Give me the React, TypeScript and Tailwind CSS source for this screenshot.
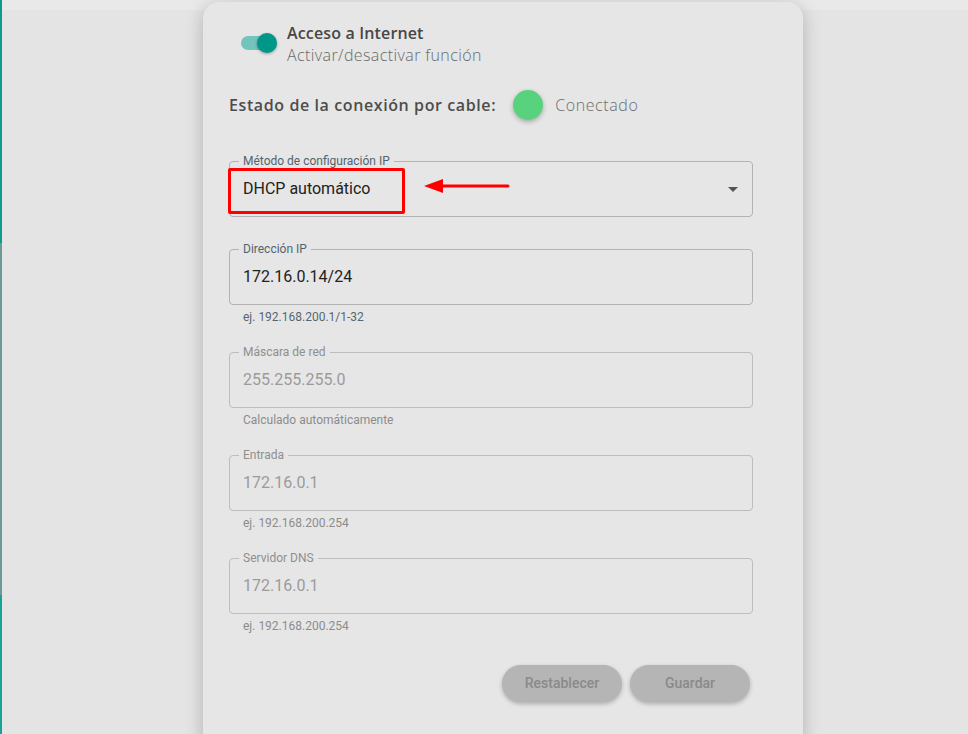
import { useState } from 'react';

interface FieldProps {
  label: string;
  value: string;
  helper?: string;
  disabled?: boolean;
}

function Field({ label, value, helper, disabled = false }: FieldProps) {
  return (
    <div className="flex flex-col">
      <fieldset
        className={
          disabled
            ? 'border border-[#bdbdbd] rounded-[4px] px-[13px] m-0'
            : 'border border-[#b3b3b3] rounded-[4px] px-[13px] m-0'
        }
      >
        <legend
          className={
            disabled
              ? 'px-[4px] -ml-[4px] text-[12px] leading-[12px] text-[#8f8f8f]'
              : 'px-[4px] -ml-[4px] text-[12px] leading-[12px] text-[#53646e]'
          }
        >
          {label}
        </legend>
        <div
          className={
            disabled
              ? 'pt-[10px] pb-[15px] text-[16px] leading-[24px] text-[#9b9b9b]'
              : 'pt-[10px] pb-[15px] text-[16px] leading-[24px] text-[#222]'
          }
        >
          {value}
        </div>
      </fieldset>
      {helper && (
        <p
          className={
            disabled
              ? 'mt-[4px] pl-[14px] text-[12px] leading-[16px] text-[#8c8c8c]'
              : 'mt-[4px] pl-[14px] text-[12px] leading-[16px] text-[#56666f]'
          }
        >
          {helper}
        </p>
      )}
    </div>
  );
}

export default function App() {
  const [enabled, setEnabled] = useState(true);

  return (
    <div
      className="relative w-full h-[734px] overflow-hidden bg-[#e4e4e4] flex items-start"
      style={{ fontFamily: 'Roboto, "Liberation Sans", sans-serif' }}
    >
      {/* dimmed page behind the dialog */}
      <div className="absolute left-0 top-0 w-full h-[10px] bg-[#e9e9e9]" />
      <div className="absolute left-0 top-0 w-[2px] h-[243px] bg-[#0f9a8e]" />
      <div className="absolute left-0 top-[243px] w-[2px] h-[352px] bg-[#6e9995]" />
      <div className="absolute left-0 top-[595px] w-[2px] h-[139px] bg-[#17a395]" />

      {/* Card */}
      <div className="relative ml-[203px] mt-[2px] w-[600px] h-[760px] bg-[#e6e6e6] rounded-t-[16px] shadow-[0_4px_18px_rgba(0,0,0,0.22)] pl-[26px]">
        {/* Toggle row */}
        <div className="flex items-start pt-[20px] pl-[12px]">
          <button
            onClick={() => setEnabled(!enabled)}
            className="relative w-[36px] h-[20px] mt-[11px] flex items-center"
          >
            <span
              className={
                enabled
                  ? 'absolute left-0 w-[34px] h-[14px] rounded-full bg-[#73c4bd]'
                  : 'absolute left-0 w-[34px] h-[14px] rounded-full bg-[#b0b0b0]'
              }
            />
            <span
              className={
                enabled
                  ? 'absolute left-[16px] w-[20px] h-[20px] rounded-full bg-[#009688] shadow-[0_1px_3px_rgba(0,0,0,0.35)]'
                  : 'absolute left-0 w-[20px] h-[20px] rounded-full bg-[#f5f5f5] shadow-[0_1px_3px_rgba(0,0,0,0.35)]'
              }
            />
          </button>
          <div
            className="ml-[10px] flex flex-col"
            style={{ fontFamily: '"Open Sans", Lato, sans-serif' }}
          >
            <span className="text-[16px] leading-[22px] font-semibold tracking-[0.15px] text-[#474747]">
              Acceso a Internet
            </span>
            <span className="text-[16px] leading-[22px] font-light tracking-[0.4px] text-[#6a6a6a]">
              Activar/desactivar función
            </span>
          </div>
        </div>

        {/* Status row */}
        <div
          className="flex items-center mt-[22px] h-[34px]"
          style={{ fontFamily: '"Open Sans", Lato, sans-serif' }}
        >
          <span className="text-[16px] font-semibold tracking-[0.6px] text-[#4d4d4d]">
            Estado de la conexión por cable:
          </span>
          <span className="ml-[17px] w-[30px] h-[30px] rounded-full bg-[#58d27c] shadow-[0_2px_5px_rgba(0,0,0,0.28)]" />
          <span className="ml-[12px] text-[16px] font-light tracking-[0.6px] text-[#6e6e6e]">
            Conectado
          </span>
        </div>

        {/* Fields */}
        <div className="w-[524px] mt-[33px] flex flex-col">
          <div className="relative">
            <fieldset className="border border-[#b3b3b3] rounded-[4px] px-[13px] m-0">
              <legend className="px-[4px] -ml-[4px] text-[12px] leading-[12px] text-[#53646e]">
                Método de configuración IP
              </legend>
              <div className="flex items-center justify-between pt-[10px] pb-[15px] text-[16px] leading-[24px] text-[#222]">
                <span>DHCP automático</span>
                <svg width="10" height="5" viewBox="0 0 10 5" className="mr-[1px]">
                  <path d="M0 0 L10 0 L5 5 Z" fill="#555" />
                </svg>
              </div>
            </fieldset>
            {/* annotation */}
            <div className="absolute left-[-1px] top-[13px] w-[177px] h-[46px] border-[3px] border-[#ff0000] rounded-[2px]" />
            <svg
              className="absolute left-[195px] top-[23px]"
              width="86"
              height="16"
              viewBox="0 0 86 16"
            >
              <path d="M18 8 L84 8" stroke="#ff0000" strokeWidth="3" strokeLinecap="round" />
              <path d="M0 8 L19 1 L19 15 Z" fill="#ff0000" />
            </svg>
          </div>

          <div className="mt-[26px]">
            <Field label="Dirección IP" value="172.16.0.14/24" helper="ej. 192.168.200.1/1-32" />
          </div>
          <div className="mt-[21px]">
            <Field
              label="Máscara de red"
              value="255.255.255.0"
              helper="Calculado automáticamente"
              disabled
            />
          </div>
          <div className="mt-[21px]">
            <Field label="Entrada" value="172.16.0.1" helper="ej. 192.168.200.254" disabled />
          </div>
          <div className="mt-[21px]">
            <Field label="Servidor DNS" value="172.16.0.1" helper="ej. 192.168.200.254" disabled />
          </div>

          {/* Actions */}
          <div className="flex justify-end gap-[8px] mt-[31px] pr-[3px]">
            <button className="w-[120px] h-[37px] rounded-full bg-[#b5b5b5] text-[14px] font-medium text-[#8a8a8a] shadow-[0_2px_4px_rgba(0,0,0,0.25)]">
              Restablecer
            </button>
            <button className="w-[120px] h-[37px] rounded-full bg-[#b5b5b5] text-[14px] font-medium text-[#8a8a8a] shadow-[0_2px_4px_rgba(0,0,0,0.25)]">
              Guardar
            </button>
          </div>
        </div>
      </div>
    </div>
  );
}
